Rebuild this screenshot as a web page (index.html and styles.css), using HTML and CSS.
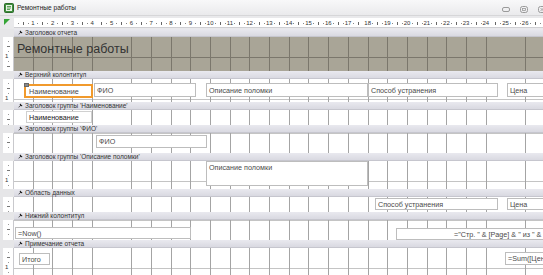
FILE: index.html
```html
<!DOCTYPE html>
<html lang="ru">

<head>
  <meta charset="UTF-8" />
  <title>Ремонтные работы</title>
  <link rel="stylesheet" href="styles.css">
</head>

<body>
  <div class="window">
    <!-- заголовок окна -->
    <div class="titlebar">
      <svg class="app-icon" width="10" height="10" viewBox="0 0 10 10">
        <rect x="0.5" y="0.5" width="9" height="9" rx="1" fill="#3f8f3d" stroke="#2d6b2b" />
        <rect x="2" y="2" width="6" height="6" fill="#e9f3e6" />
        <path d="M3 3.5h4M3 5h4M3 6.5h3" stroke="#3f8f3d" stroke-width="0.8" />
      </svg>
      <span class="title">Ремонтные работы</span>
      <div class="win-btns">
        <svg width="8" height="7" viewBox="0 0 8 7"><rect x="0.5" y="1.5" width="7" height="4" rx="1.5" fill="none" stroke="#9a9a9a" /></svg>
        <svg width="8" height="7" viewBox="0 0 8 7"><rect x="0.5" y="0.5" width="7" height="6" rx="2" fill="none" stroke="#9a9a9a" /><rect x="2.5" y="2.5" width="3" height="2" fill="none" stroke="#9a9a9a" stroke-width="0.8" /></svg>
        <svg width="8" height="7" viewBox="0 0 8 7"><rect x="0.5" y="0.5" width="7" height="6" rx="2" fill="none" stroke="#9a9a9a" /><path d="M2.5 2l3 3M5.5 2l-3 3" stroke="#9a9a9a" stroke-width="0.8" /></svg>
      </div>
    </div>

    <!-- линейка -->
    <div class="ruler-row">
      <div class="corner">
        <svg width="6" height="6" viewBox="0 0 6 6"><path d="M0 0H6L0 6Z" fill="#35a536" /></svg>
      </div>
      <div class="hruler">
        <span>1</span><span>2</span><span>3</span><span>4</span><span>5</span><span>6</span><span>7</span>
        <span>8</span><span>9</span><span>10</span><span>11</span><span>12</span><span>13</span><span>14</span>
        <span>15</span><span>16</span><span>17</span><span>18</span><span>19</span><span>20</span><span>21</span>
        <span>22</span><span>23</span><span>24</span><span>25</span><span>26</span>
      </div>
    </div>

    <!-- Заголовок отчета -->
    <div class="bar">
      <div class="gutter"></div>
      <div class="bar-label"><svg class="pin" viewBox="0 0 6 6"><path d="M2.5 0.5L5.5 3.5L4 4L3.2 3.2L1 5.5L0.5 5L2.8 2.8L2 2Z" /></svg>Заголовок отчета</div>
    </div>
    <div class="band h34">
      <div class="vruler"><span class="one">1</span></div>
      <div class="canvas dark">
        <span class="report-title">Ремонтные работы</span>
      </div>
    </div>

    <!-- Верхний колонтитул -->
    <div class="bar">
      <div class="gutter"></div>
      <div class="bar-label"><svg class="pin" viewBox="0 0 6 6"><path d="M2.5 0.5L5.5 3.5L4 4L3.2 3.2L1 5.5L0.5 5L2.8 2.8L2 2Z" /></svg>Верхний колонтитул</div>
    </div>
    <div class="band h23">
      <div class="vruler"><span class="one">1</span></div>
      <div class="canvas">
        <div class="ctl selected" style="left:10px;top:5px;width:69px;height:14px">Наименование<span class="handle"></span></div>
        <div class="ctl" style="left:80px;top:4px;width:102px;height:14px">ФИО</div>
        <div class="ctl" style="left:192px;top:4px;width:162px;height:14px">Описание поломки</div>
        <div class="ctl" style="left:354px;top:4px;width:130px;height:14px">Способ устранения</div>
        <div class="ctl" style="left:493px;top:4px;width:60px;height:14px">Цена</div>
      </div>
    </div>

    <!-- Заголовок группы 'Наименование' -->
    <div class="bar">
      <div class="gutter"></div>
      <div class="bar-label"><svg class="pin" viewBox="0 0 6 6"><path d="M2.5 0.5L5.5 3.5L4 4L3.2 3.2L1 5.5L0.5 5L2.8 2.8L2 2Z" /></svg>Заголовок группы 'Наименование'</div>
    </div>
    <div class="band h15">
      <div class="vruler"></div>
      <div class="canvas">
        <div class="ctl strong" style="left:12px;top:1px;width:66px;height:12px">Наименование</div>
      </div>
    </div>

    <!-- Заголовок группы 'ФИО' -->
    <div class="bar">
      <div class="gutter"></div>
      <div class="bar-label"><svg class="pin" viewBox="0 0 6 6"><path d="M2.5 0.5L5.5 3.5L4 4L3.2 3.2L1 5.5L0.5 5L2.8 2.8L2 2Z" /></svg>Заголовок группы 'ФИО'</div>
    </div>
    <div class="band h20">
      <div class="vruler"></div>
      <div class="canvas">
        <div class="ctl" style="left:82px;top:2px;width:111px;height:13px">ФИО</div>
      </div>
    </div>

    <!-- Заголовок группы 'Описание поломки' -->
    <div class="bar">
      <div class="gutter"></div>
      <div class="bar-label"><svg class="pin" viewBox="0 0 6 6"><path d="M2.5 0.5L5.5 3.5L4 4L3.2 3.2L1 5.5L0.5 5L2.8 2.8L2 2Z" /></svg>Заголовок группы 'Описание поломки'</div>
    </div>
    <div class="band h28">
      <div class="vruler"><span class="one">1</span></div>
      <div class="canvas">
        <div class="ctl tall" style="left:192px;top:0;width:162px;height:25px">Описание поломки</div>
      </div>
    </div>

    <!-- Область данных -->
    <div class="bar">
      <div class="gutter"></div>
      <div class="bar-label"><svg class="pin" viewBox="0 0 6 6"><path d="M2.5 0.5L5.5 3.5L4 4L3.2 3.2L1 5.5L0.5 5L2.8 2.8L2 2Z" /></svg>Область данных</div>
    </div>
    <div class="band h15">
      <div class="vruler"></div>
      <div class="canvas">
        <div class="ctl" style="left:361px;top:1px;width:123px;height:12px">Способ устранения</div>
        <div class="ctl" style="left:493px;top:1px;width:60px;height:12px">Цена</div>
      </div>
    </div>

    <!-- Нижний колонтитул -->
    <div class="bar">
      <div class="gutter"></div>
      <div class="bar-label"><svg class="pin" viewBox="0 0 6 6"><path d="M2.5 0.5L5.5 3.5L4 4L3.2 3.2L1 5.5L0.5 5L2.8 2.8L2 2Z" /></svg>Нижний колонтитул</div>
    </div>
    <div class="band h20">
      <div class="vruler"></div>
      <div class="canvas">
        <div class="ctl" style="left:1px;top:7px;width:176px;height:12px">=Now()</div>
        <div class="ctl page" style="left:382px;top:8px;width:200px;height:12px">="Стр. " &amp; [Page] &amp; " из " &amp;</div>
      </div>
    </div>

    <!-- Примечание отчета -->
    <div class="bar">
      <div class="gutter"></div>
      <div class="bar-label"><svg class="pin" viewBox="0 0 6 6"><path d="M2.5 0.5L5.5 3.5L4 4L3.2 3.2L1 5.5L0.5 5L2.8 2.8L2 2Z" /></svg>Примечание отчета</div>
    </div>
    <div class="band last">
      <div class="vruler"><span class="one">1</span></div>
      <div class="canvas">
        <div class="ctl" style="left:5px;top:5px;width:31px;height:12px">Итого</div>
        <div class="ctl" style="left:491px;top:4px;width:60px;height:13px">=Sum([Цена])</div>
      </div>
    </div>
  </div>
</body>

</html>
```

FILE: styles.css
```css
* {
  margin: 0;
  padding: 0;
  box-sizing: border-box;
}

body {
  font-family: "Liberation Sans", Arial, sans-serif;
  background: #f0f0f0;
}

.window {
  width: 543px;
  height: 275px;
  overflow: hidden;
  display: flex;
  flex-direction: column;
}

/* заголовок окна */
.titlebar {
  height: 16px;
  flex: none;
  display: flex;
  align-items: center;
  padding-left: 4px;
  background: linear-gradient(#f8f8f9, #eaeaec);
  border-bottom: 1px solid #d6d6d8;
}

.titlebar .title {
  margin-left: 3px;
  font-size: 6.6px;
  color: #222;
}

.win-btns {
  margin-left: auto;
  display: flex;
  gap: 10px;
  margin-right: -3px;
  margin-top: 4px;
}

/* линейка */
.ruler-row {
  height: 13px;
  flex: none;
  display: flex;
  padding-top: 2px;
  background: #e9e9eb;
}

.corner {
  width: 14px;
  padding: 1px 0 0 4px;
}

.corner svg {
  display: block;
}

.hruler {
  flex: 1;
  height: 10px;
  display: flex;
  padding-left: 9.15px;
  overflow: hidden;
  background-color: #fff;
  background-image:
    repeating-linear-gradient(to right, transparent 0 8.65px, #666 8.65px 9.65px, transparent 9.65px 19.7px),
    repeating-linear-gradient(to right, transparent 0 3.7px, #888 3.7px 4.7px, transparent 4.7px 13.6px, #888 13.6px 14.6px, transparent 14.6px 19.7px);
  background-size: 100% 3px, 100% 1px;
  background-position: 0 4px, 0 5px;
  background-repeat: no-repeat;
  border-bottom: 1px solid #cfcfd3;
}

.hruler span {
  flex: none;
  width: 19.7px;
  text-align: center;
  font-size: 6px;
  line-height: 10px;
  color: #333;
}

/* полосы разделов */
.bar {
  height: 8px;
  flex: none;
  display: flex;
}

.gutter {
  width: 14px;
  background: #e6e6e8;
}

.bar-label {
  flex: 1;
  display: flex;
  align-items: center;
  padding-left: 4px;
  font-size: 6.5px;
  color: #333;
  background: linear-gradient(#e9e9ef, #d9d9e1);
  border-bottom: 1px solid #c6c6ce;
  white-space: nowrap;
}

.pin {
  width: 5px;
  height: 5px;
  margin-right: 2px;
  fill: #111;
}

/* области */
.band {
  flex: none;
  display: flex;
}

.h34 { height: 34px; }
.h28 { height: 28px; }
.h23 { height: 23px; }
.h20 { height: 20px; }
.h15 { height: 15px; }

.band.last {
  flex: 1;
}

.vruler {
  width: 14px;
  flex: none;
  position: relative;
  background-color: #fff;
  background-image:
    repeating-linear-gradient(to bottom, transparent 0 9.3px, #777 9.3px 10.3px, transparent 10.3px 19.7px),
    repeating-linear-gradient(to bottom, transparent 0 4.4px, #999 4.4px 5.4px, transparent 5.4px 14.3px, #999 14.3px 15.3px, transparent 15.3px 19.7px);
  background-size: 3px 100%, 1px 100%;
  background-position: 4px 0, 5px 0;
  background-repeat: no-repeat;
  border-left: 3px solid #e6e6e8;
  border-right: 1px solid #c9c9cd;
}

.vruler .one {
  position: absolute;
  left: 2px;
  top: 16px;
  font-size: 6px;
  line-height: 7px;
  color: #333;
  background: #fff;
}

.canvas {
  flex: 1;
  position: relative;
  overflow: hidden;
  background-color: #fff;
  background-image:
    repeating-linear-gradient(to right, transparent 0 18.7px, #a4a4a4 18.7px 19.7px),
    repeating-linear-gradient(to bottom, transparent 0 18.7px, #c4c4c4 18.7px 19.7px);
  background-position: 0 0, 0 1px;
}

.canvas.dark {
  background-color: #a9a597;
  background-image:
    repeating-linear-gradient(to right, transparent 0 18.7px, #7b776c 18.7px 19.7px),
    repeating-linear-gradient(to bottom, transparent 0 18.7px, #7b776c 18.7px 19.7px);
}

.report-title {
  position: absolute;
  left: 3px;
  top: 5px;
  font-size: 12.5px;
  line-height: 14px;
  color: #333;
  white-space: nowrap;
}

/* элементы управления */
.ctl {
  position: absolute;
  padding-left: 2px;
  display: flex;
  align-items: center;
  font-size: 7.2px;
  color: #4a4a4a;
  white-space: nowrap;
  overflow: hidden;
  background: #fff;
  border: 1px solid #bdbdbd;
}

.ctl.strong {
  color: #222;
  border-color: #d0d0d0;
}

.ctl.tall {
  align-items: flex-start;
  line-height: 12px;
}

.ctl.page {
  padding-left: 57px;
}

.ctl.selected {
  overflow: visible;
  padding-left: 3px;
  border: 2px solid #f19a2c;
}

.handle {
  position: absolute;
  left: -2px;
  top: -3px;
  width: 5px;
  height: 4px;
  background: #8a8a8a;
  border: 1px solid #666;
}
```
